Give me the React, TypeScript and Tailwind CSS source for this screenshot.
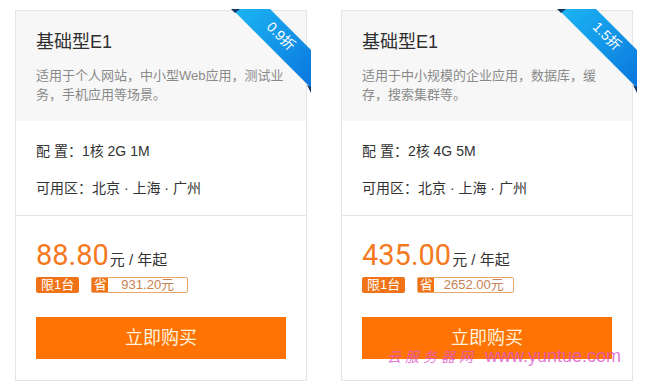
import React from 'react';

type Plan = {
  discount: string;
  desc: React.ReactNode;
  spec: string;
  price: string;
  save: string;
  gid: string;
};

const plans: Plan[] = [
  {
    discount: '0.9折',
    desc: (
      <>
        适用于个人网站，中小型Web应用，测试业
        <br />
        务，手机应用等场景。
      </>
    ),
    spec: '1核 2G 1M',
    price: '88.80',
    save: '931.20元',
    gid: 'rb1',
  },
  {
    discount: '1.5折',
    desc: (
      <>
        适用于中小规模的企业应用，数据库，缓
        <br />
        存，搜索集群等。
      </>
    ),
    spec: '2核 4G 5M',
    price: '435.00',
    save: '2652.00元',
    gid: 'rb2',
  },
];

const Ribbon: React.FC<{ text: string; gid: string }> = ({ text, gid }) => (
  <svg className="absolute top-[-2px] right-[-5px]" width="82" height="84" viewBox="0 0 82 84">
    <defs>
      <linearGradient id={gid} x1="0" y1="0" x2="1" y2="1">
        <stop offset="0" stopColor="#1cb6f3" />
        <stop offset="1" stopColor="#0a76dd" />
      </linearGradient>
    </defs>
    <polygon points="3,0 41,0 82,41 82,79" fill={`url(#${gid})`} />
    <polygon points="2,0 11,0 6,4" fill="#123a66" />
    <polygon points="78,76 82,78 82,84" fill="#0d3566" />
    <text
      x="52"
      y="27"
      transform="rotate(45 52 27)"
      textAnchor="middle"
      dominantBaseline="central"
      fill="#ffffff"
      fontSize="14"
      fontFamily="'Liberation Sans','Noto Sans CJK SC',sans-serif"
    >
      {text}
    </text>
  </svg>
);

const PlanCard: React.FC<{ plan: Plan }> = ({ plan }) => (
  <div className="relative w-[292px] h-[371px] border border-[#e4e4e4] bg-white flex flex-col">
    <Ribbon text={plan.discount} gid={plan.gid} />
    <div className="bg-[#f7f7f7] h-[110px] px-[20px] pt-[19px]">
      <h3 className="text-[18px] leading-[24px] text-[#2e2e2e]">基础型E1</h3>
      <p className="mt-[12px] text-[13px] leading-[19px] text-[#8a8a8a] whitespace-nowrap">{plan.desc}</p>
    </div>
    <div className="h-[95px] border-b border-[#e4e4e4] px-[20px] pt-[20px] text-[14px] leading-[20px] text-[#333]">
      <p>配 置：{plan.spec}</p>
      <p className="mt-[17px]">可用区：北京 · 上海 · 广州</p>
    </div>
    <div className="px-[20px] pt-[22px]">
      <div className="flex items-baseline h-[34px]">
        <span className="text-[29px] leading-[34px] text-[#f47920] font-['Roboto',sans-serif]">{plan.price}</span>
        <span className="text-[15px] text-[#333] ml-[1px]">元 / 年起</span>
      </div>
      <div className="flex items-center mt-[5px] h-[16px] text-[13px] leading-[16px]">
        <span className="bg-[#f07318] text-white px-[5px] rounded-[2px]">限1台</span>
        <span className="ml-[12px] flex h-[16px] w-[97px] border border-[#e9a66a] rounded-[2px]">
          <span className="bg-[#f07318] text-white w-[16px] text-center leading-[14px]">省</span>
          <span className="flex-1 text-center text-[#c48255] leading-[14px]">{plan.save}</span>
        </span>
      </div>
      <button className="mt-[24px] w-[250px] h-[42px] bg-[#ff7304] text-[#fff1dc] text-[18px]">
        立即购买
      </button>
    </div>
  </div>
);

export default function App() {
  return (
    <div className="relative w-[650px] h-[388px] bg-white overflow-hidden font-['Liberation_Sans','Noto_Sans_CJK_SC',sans-serif]">
      <div className="flex gap-[34px] pl-[15px] pt-[10px]">
        {plans.map(p => (
          <PlanCard key={p.gid} plan={p} />
        ))}
      </div>
      <div className="absolute left-[387px] top-[343px] flex items-center text-[#dd55cc]/80 pointer-events-none">
        <span className="text-[14px] tracking-[4px] italic font-['Noto_Sans_CJK_SC',serif]">云服务器网</span>
        <span className="ml-[8px] text-[18px] font-['Liberation_Sans',sans-serif]">www.yuntue.com</span>
      </div>
    </div>
  );
}
